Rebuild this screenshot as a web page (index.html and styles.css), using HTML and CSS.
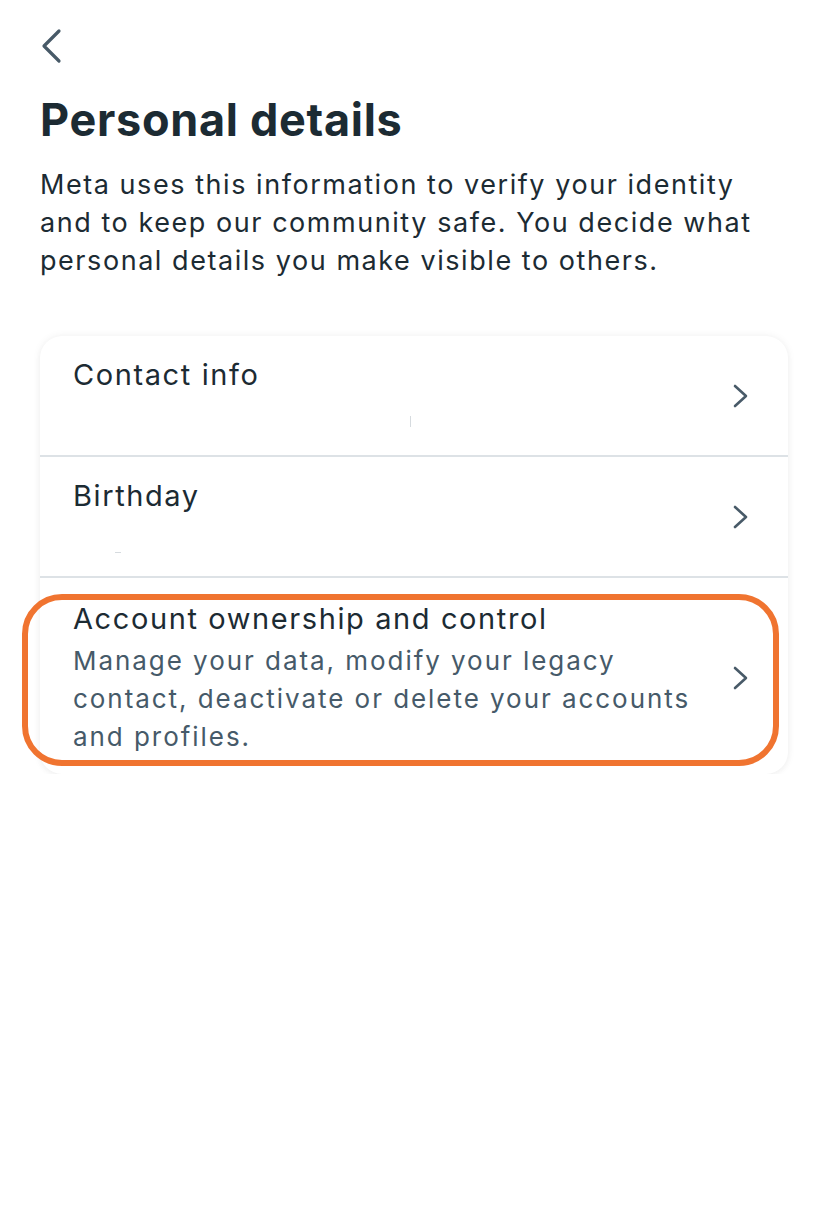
FILE: index.html
```html
<!DOCTYPE html>
<html lang="en">
<head>
<meta charset="utf-8">
<title>Personal details</title>
<link rel="stylesheet" href="styles.css">
</head>
<body>
<div class="page">
  <header class="topbar">
    <svg class="back" width="24" height="36" viewBox="0 0 24 36" aria-hidden="true">
      <path d="M19 3 L4 18 L19 33" fill="none" stroke="#485a68" stroke-width="3.2" stroke-linecap="round" stroke-linejoin="round"/>
    </svg>
  </header>
  <h1 class="title">Personal details</h1>
  <p class="intro">Meta uses this information to verify your identity and to keep our community safe. You decide what personal details you make visible to others.</p>

  <div class="card">
    <div class="row row-tall">
      <div class="row-text">
        <div class="row-title">Contact info</div>
        <span class="mark mark-v"></span>
      </div>
      <svg class="chev" width="18" height="26" viewBox="0 0 18 26" aria-hidden="true"><path d="M3 3 L14 13 L3 23" fill="none" stroke="#485a68" stroke-width="2.6" stroke-linecap="round" stroke-linejoin="round"/></svg>
    </div>
    <div class="row row-tall">
      <div class="row-text">
        <div class="row-title">Birthday</div>
        <span class="mark mark-h"></span>
      </div>
      <svg class="chev" width="18" height="26" viewBox="0 0 18 26" aria-hidden="true"><path d="M3 3 L14 13 L3 23" fill="none" stroke="#485a68" stroke-width="2.6" stroke-linecap="round" stroke-linejoin="round"/></svg>
    </div>
    <div class="row row-last">
      <div class="row-text">
        <div class="row-title">Account ownership and control</div>
        <div class="row-sub">Manage your data, modify your legacy contact, deactivate or delete your accounts and profiles.</div>
      </div>
      <svg class="chev" width="18" height="26" viewBox="0 0 18 26" aria-hidden="true"><path d="M3 3 L14 13 L3 23" fill="none" stroke="#485a68" stroke-width="2.6" stroke-linecap="round" stroke-linejoin="round"/></svg>
      <div class="highlight"></div>
    </div>
  </div>
</div>
</body>
</html>
```

FILE: styles.css
```css
* { box-sizing: border-box; }
html, body {
  margin: 0;
  padding: 0;
  background: #ffffff;
}
body {
  font-family: Inter, "Noto Sans", "Liberation Sans", sans-serif;
  color: #1c2b33;
}
.page {
  width: 828px;
  padding: 0 40px;
}
.topbar {
  height: 88px;
  padding-top: 28px;
}
.back {
  display: block;
}
.title {
  margin: 0;
  font-size: 45px;
  font-weight: 700;
  line-height: 64px;
  letter-spacing: 0.7px;
  color: #1c2b33;
}
.intro {
  margin: 14px 0 0;
  font-size: 27px;
  line-height: 38px;
  letter-spacing: 1.55px;
  color: #1c2b33;
  width: 728px;
}
.card {
  margin-top: 56px;
  width: 748px;
  background: #ffffff;
  border-radius: 22px;
  box-shadow: 0 0 8px rgba(0, 0, 0, 0.06), 0 2px 6px rgba(0, 0, 0, 0.03);
}
.row {
  position: relative;
  display: flex;
  align-items: center;
  padding: 0 38px 0 33px;
  border-bottom: 2px solid #dde2e6;
}
.row-tall { height: 121px; }
.row-tall .row-text { align-self: stretch; padding-top: 20px; }
.row-last { border-bottom: none; padding-top: 22px; padding-bottom: 18px; }
.row-text {
  flex: 1;
  position: relative;
}
.row-title {
  font-size: 29px;
  line-height: 38px;
  letter-spacing: 1.6px;
  color: #1c2b33;
}
.row-sub {
  margin-top: 4px;
  font-size: 26px;
  line-height: 38px;
  letter-spacing: 1.95px;
  color: #465a69;
  width: 645px;
}
.chev { flex: none; display: block; }
.mark {
  position: absolute;
  background: #d6dbdf;
}
.mark-v { left: 337px; top: 80px; width: 1px; height: 11px; }
.mark-h { left: 42px; top: 95px; width: 6px; height: 1px; }
.highlight {
  position: absolute;
  left: -18px;
  top: 16px;
  width: 757px;
  height: 172px;
  border: 6px solid #f07430;
  border-radius: 40px;
  pointer-events: none;
}
```
